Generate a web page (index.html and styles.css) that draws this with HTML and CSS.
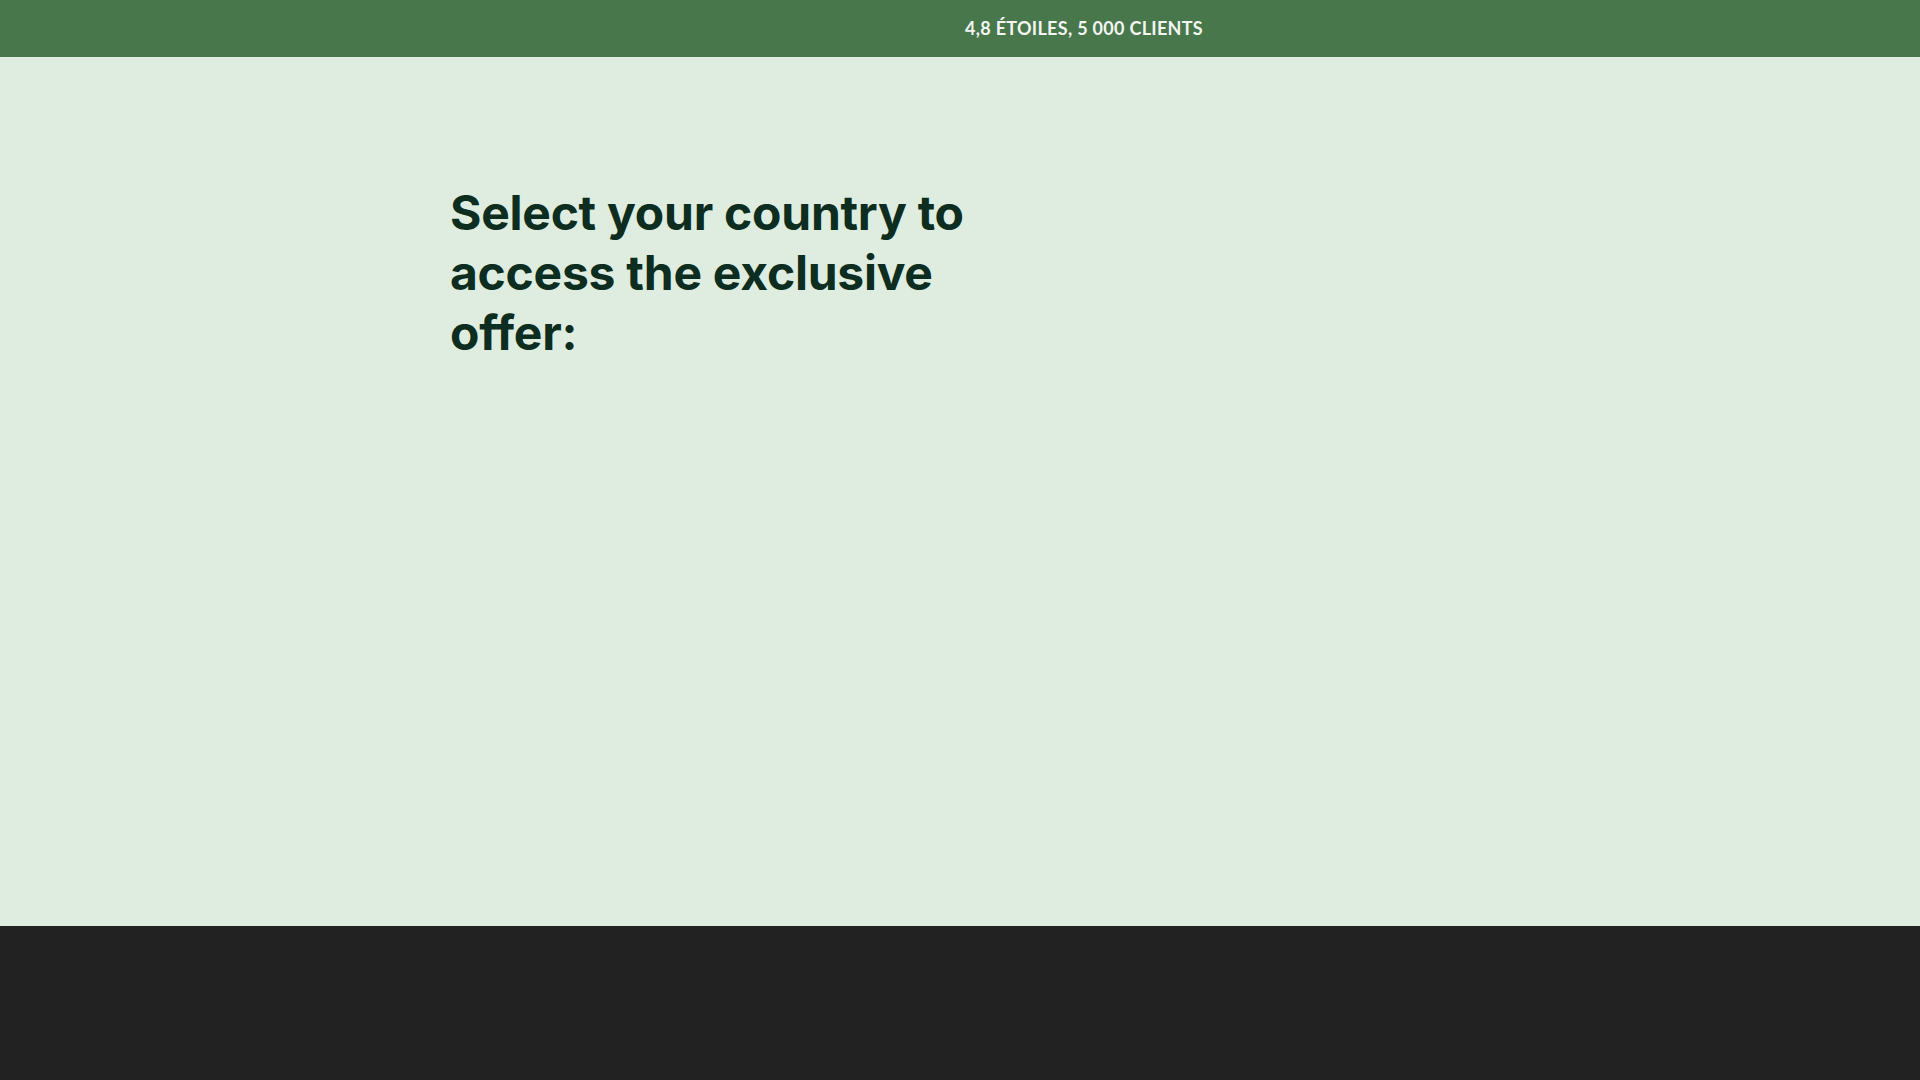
FILE: index.html
```html
<!DOCTYPE html>
<html lang="fr">
<head>
    <meta charset="UTF-8">
    <meta name="viewport" content="width=device-width, initial-scale=1.0">
    <link rel="stylesheet" href="styles.css">
</head>
<body>
    <div class="topbar">
        <span class="topbar-text">4,8 ÉTOILES, 5 000 CLIENTS</span>
    </div>
    <main class="hero">
        <div class="hero-inner">
            <h1 class="hero-title">Select your country to access the exclusive offer:</h1>
        </div>
    </main>
    <footer class="footer"></footer>
</body>
</html>
```

FILE: styles.css
```css
body {
    margin: 0;
    padding: 0;
    font-family: 'Inter', 'Lato', sans-serif;
    background-color: #222222;
}

.topbar {
    height: 57px;
    display: flex;
    align-items: center;
    justify-content: center;
    padding-left: 248px;
    padding-bottom: 2px;
    box-sizing: border-box;
    background-color: #48774b;
}

.topbar-text {
    font-family: 'Lato', sans-serif;
    color: #f2f5f1;
    font-size: 18px;
    font-weight: 700;
    letter-spacing: 0.3px;
}

.hero {
    height: 869px;
    box-sizing: border-box;
    background-color: #deede0;
    padding-top: 126px;
}

.hero-inner {
    width: 1020px;
    margin: 0 auto;
}

.hero-title {
    margin: 0;
    width: 560px;
    color: #0d2d21;
    font-size: 48px;
    font-weight: 650;
    line-height: 60px;
    letter-spacing: -0.25px;
}

.footer {
    height: 154px;
    background-color: #222222;
}
```
